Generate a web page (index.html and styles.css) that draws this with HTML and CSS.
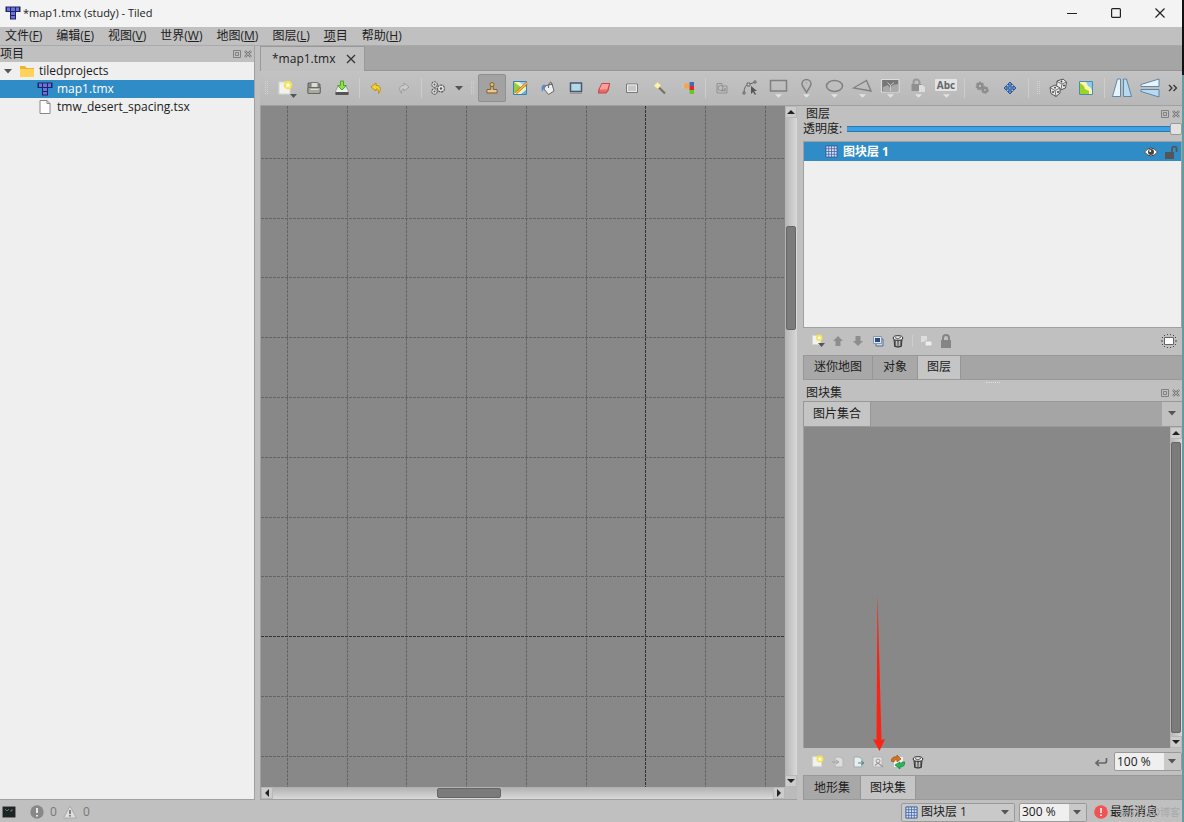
FILE: index.html
```html
<!DOCTYPE html>
<html lang="zh-CN">
<head>
<meta charset="utf-8">
<title>*map1.tmx (study) - Tiled</title>
<link rel="stylesheet" href="styles.css">
</head>
<body>
<svg class="defs" aria-hidden="true">
  <defs>
    <symbol id="logo" viewBox="0 0 16 14"><path d="M.5.5h15v5.500H11v7.500H5V6H.5z" fill="#20245e"/><path d="M2 1.500h3v3.500H2zM6 1.500h4v3.500H6zM11 1.500h3V5h-3zM6 6h4v3H6zM6 10h4v2.500H6z" fill="#6874e6"/></symbol>
    <symbol id="float" viewBox="0 0 8 8"><path d="M.5.5h7v7h-7zM2.500 2.500h3v3h-3z" fill="none" stroke="#808080"/></symbol>
    <symbol id="dockx" viewBox="0 0 8 8"><path d="M1 1l6 6M7 1L1 7" stroke="#777" stroke-width="2.400"/><path d="M1 1l6 6M7 1L1 7" stroke="#c4c4c4" stroke-width=".7"/></symbol>
    <symbol id="down" viewBox="0 0 8 5"><path d="M0 0h8L4 4.500z" fill="#555"/></symbol>
    <symbol id="new" viewBox="0 0 16 16"><path d="M2 2h11v12H2z" fill="#f2f2ee" stroke="#d6d6d0"/><circle cx="11" cy="5" r="4.300" fill="#f3e34d"/><path d="M11 2l.9 2 2.100.2-1.600 1.400.5 2.100-1.900-1.100-1.900 1.100.5-2.100L8 4.200l2.100-.2z" fill="#fffef0"/></symbol>
    <symbol id="grid" viewBox="0 0 14 14"><path d="M1 1h12v12H1z" fill="#d3e1f7" stroke="#36558f"/><path d="M4 1v12M7 1v12M10 1v12M1 4h12M1 7h12M1 10h12" stroke="#3d60a0" stroke-width=".8"/></symbol>
    <symbol id="trash" viewBox="0 0 14 14"><path d="M3 5l.7 7.500q3.300 1.200 6.600 0L11 5z" fill="#6d716d" stroke="#333"/><path d="M5.500 7l.3 5M8.500 7l-.3 5" stroke="#ccc"/><ellipse cx="7" cy="4" rx="4.800" ry="2.300" fill="#eee" stroke="#333"/><path d="M4 3.500l3 1.500 3-2" stroke="#555" fill="none"/></symbol>
    <symbol id="drop" viewBox="0 0 10 5"><path d="M0 0h10L5 5z" fill="#e3e3e3"/></symbol>
  </defs>
</svg>

<header class="titlebar">
  <svg class="app-logo"><use href="#logo"/></svg>
  <span class="title">*map1.tmx (study) - Tiled</span>
  <button class="win" aria-label="最小化"><svg viewBox="0 0 10 10"><path d="M0 5.500h10" stroke="#222"/></svg></button>
  <button class="win" aria-label="最大化"><svg viewBox="0 0 10 10"><rect x=".6" y=".6" width="8.800" height="8.800" rx="1" fill="none" stroke="#222" stroke-width="1.200"/></svg></button>
  <button class="win" aria-label="关闭"><svg viewBox="0 0 10 10"><path d="M.5.5l9 9M9.500.5l-9 9" stroke="#222" stroke-width="1.200"/></svg></button>
</header>

<nav class="menubar">
  <button>文件(<u>F</u>)</button><button>编辑(<u>E</u>)</button><button>视图(<u>V</u>)</button><button>世界(<u>W</u>)</button><button>地图(<u>M</u>)</button><button>图层(<u>L</u>)</button><button><u>项</u>目</button><button>帮助(<u>H</u>)</button>
</nav>

<div class="workspace">
  <aside class="project">
    <div class="dock-title"><h2>项目</h2><button aria-label="浮动"><svg><use href="#float"/></svg></button><button aria-label="关闭"><svg><use href="#dockx"/></svg></button></div>
    <ul class="tree">
      <li class="row root"><svg class="twist"><use href="#down"/></svg><svg class="ico" viewBox="0 0 16 14"><path d="M1 2h5l1.500 2H15v9H1z" fill="#f0b429"/><path d="M1 5h14v8H1z" fill="#ffd25c"/></svg><span>tiledprojects</span></li>
      <li class="row leaf selected"><svg class="ico"><use href="#logo"/></svg><span>map1.tmx</span></li>
      <li class="row leaf"><svg class="ico" viewBox="0 0 16 14"><path d="M3 .5h7l3 3v10H3z" fill="#fff" stroke="#888"/><path d="M10 .5v3h3" fill="none" stroke="#888"/></svg><span>tmw_desert_spacing.tsx</span></li>
    </ul>
  </aside>
  <div class="vsplit"></div>

  <section class="editor">
    <div class="doc-tabs"><div class="doc-tab"><span>*map1.tmx</span><button aria-label="关闭 map1.tmx"><svg viewBox="0 0 10 10"><path d="M1 1l8 8M9 1L1 9" stroke="#333" stroke-width="1.300"/></svg></button></div></div>

    <div class="toolbar">
      <i class="handle"></i>
      <button class="tool" aria-label="新建"><svg viewBox="0 0 22 22"><use href="#new" x="2" y="3" width="16" height="16"/><path d="M15 17h7l-3.500 4z" fill="#555"/></svg></button>
      <button class="tool" aria-label="打开"><svg viewBox="0 0 22 22"><path d="M5 16V6h4l1 1h7v9" fill="#8b8e84" stroke="#62645d"/><path d="M8 5.500h7v5H8z" fill="#dcdcd6" stroke="#777"/><path d="M5 10.500h12.500l-.5 6H5z" fill="#a7aa9e" stroke="#686a62"/><path d="M7.500 12.500h8" stroke="#dcded5"/></svg></button>
      <button class="tool" aria-label="保存"><svg viewBox="0 0 22 22"><path d="M7 9h8l2 4v4H5v-4z" fill="#e6e6e6" stroke="#999"/><path d="M4.500 15h13v3h-13z" fill="#555"/><path d="M5.500 13h11v2h-11z" fill="#f0f0f0"/><path d="M9.500 4h3v4.500h2.800L11 13 6.700 8.500h2.800z" fill="#8ce44c" stroke="#43a017" stroke-width=".9"/></svg></button>
      <i class="sep"></i>
      <button class="tool" aria-label="撤销"><svg viewBox="0 0 22 22"><path d="M6 10l5-4v2.500c5 0 5.500 4 2.500 8 .5-3.500 0-4.500-2.500-4.500v2z" fill="#f3d42c" stroke="#b58c0c" stroke-width=".9"/></svg></button>
      <button class="tool" aria-label="重做"><svg viewBox="0 0 22 22"><path d="M16 10l-5-4v2.500c-5 0-5.500 4-2.500 8-.5-3.500 0-4.500 2.500-4.500v2z" fill="#ccc" stroke="#999" stroke-width=".9"/></svg></button>
      <i class="sep"></i>
      <button class="tool" aria-label="命令"><svg viewBox="0 0 22 22" fill="none" stroke="#555"><g stroke-dasharray="2 .8"><circle cx="7.500" cy="7.500" r="2.500" stroke-width="1.500"/><circle cx="7.500" cy="14.500" r="2.500" stroke-width="1.500"/><circle cx="14" cy="11.500" r="3.200" stroke-width="1.700"/></g><g fill="#e8e8e8" stroke="none"><circle cx="7.500" cy="7.500" r="2.200"/><circle cx="7.500" cy="14.500" r="2.200"/><circle cx="14" cy="11.500" r="2.800"/></g><g fill="#555" stroke="none"><circle cx="7.500" cy="7.500" r="1"/><circle cx="7.500" cy="14.500" r="1"/><circle cx="14" cy="11.500" r="1.200"/></g></svg></button>
      <button class="tool-drop" aria-label="命令菜单"><svg><use href="#down"/></svg></button>
      <i class="handle"></i>
      <button class="tool active" aria-label="图章刷"><svg viewBox="0 0 22 22"><path d="M10 9h2l.5 3.500H16v3.500H6v-3.500h3.500z" fill="#d8b273" stroke="#7f5a24" stroke-width=".9"/><circle cx="11" cy="7.500" r="2" fill="#dfbd83" stroke="#7f5a24" stroke-width=".9"/><path d="M6.500 14h9" stroke="#f2dfb9"/></svg></button>
      <button class="tool" aria-label="地形刷"><svg viewBox="0 0 22 22"><path d="M4.500 4.500h13v13h-13z" fill="#f3f4c5" stroke="#3b7fad"/><path d="M5 5l8 6-8 6z" fill="#93cf3f"/><path d="M10 5h7v5z" fill="#95d0f0"/><path d="M12 17l5-4v4z" fill="#66b2e0"/><path d="M7 16L18 6" stroke="#b9601c" stroke-width="2.400"/><path d="M7 16L18 6" stroke="#ffbd4b" stroke-width="1.500"/></svg></button>
      <button class="tool" aria-label="填充"><svg viewBox="0 0 22 22"><path d="M8 9l7-2 2 7-5.500 3.500L7 12z" fill="#eee" stroke="#666"/><path d="M11.500 11c0-7 3.500-7 3.500-3" fill="none" stroke="#555"/><path d="M9 8c-4-1-5 1-4 7 2-3 2-4 4-5z" fill="#5b8ac4"/></svg></button>
      <button class="tool" aria-label="形状填充"><svg viewBox="0 0 22 22"><path d="M5.500 6h11v8.500h-11z" fill="#b4d6e8" stroke="#455968" stroke-width="1.500"/><path d="M5 16.500h12" stroke="#999"/></svg></button>
      <button class="tool" aria-label="橡皮"><svg viewBox="0 0 22 22"><path d="M9 6.500h7.500l-1.500 7-2 2.500H5.500l.5-3.500z" fill="#e56c6c" stroke="#cc4545" stroke-width="1.200" stroke-linejoin="round"/><path d="M9 7h7l-2 5.500H6.500z" fill="#ff9e9e"/></svg></button>
      <button class="tool" aria-label="矩形选择"><svg viewBox="0 0 22 22"><path d="M5.500 7h11v8.500h-11z" fill="#c6c6c6" stroke="#777"/><path d="M6.500 8h9v6.500h-9z" fill="none" stroke="#eee"/></svg></button>
      <button class="tool" aria-label="魔术棒"><svg viewBox="0 0 22 22"><path d="M10 10.500l6 6" stroke="#74745c" stroke-width="2.200"/><circle cx="8.500" cy="8.500" r="2.600" fill="#efe79a"/><path d="M8.500 4.500l.9 3.100L12.500 8.500l-3.100.9-.9 3.100-.9-3.100L4.500 8.500l3.100-.9z" fill="#fff6a8"/></svg></button>
      <button class="tool" aria-label="同类选择"><svg viewBox="0 0 22 22"><path d="M12.500 5H17v4h-4.500z" fill="#3d6db7"/><path d="M12.500 9H17v4h-4.500z" fill="#db2c20"/><path d="M12.500 13H17v4h-4.500z" fill="#65c72c"/><path d="M4.500 7h3v4h-3z" fill="#bcc4cc"/><circle cx="9.500" cy="9" r="2.700" fill="#f9a34a"/></svg></button>
      <i class="sep"></i>
      <button class="tool" aria-label="选择对象"><svg viewBox="0 0 22 22" fill="none" stroke="#929292"><path d="M6 6.500h5V9h5v7H6z"/><circle cx="9.500" cy="11" r="2.500"/><path d="M10 13.500h4V11" stroke-width="1.300"/></svg></button>
      <button class="tool" aria-label="编辑多边形"><svg viewBox="0 0 22 22" fill="none" stroke="#666"><path d="M5 16q0-8 5-9t6-2"/><path d="M4 15h2v2H4zM8 6h3v3H8zM15 4h2v2h-2z" fill="#ccc"/><path d="M12 9v8l2-2 2 3 1-1-2-3h3z" fill="#555" stroke="none"/></svg></button>
      <button class="tool" aria-label="插入矩形"><svg viewBox="0 0 22 22"><path d="M3.500 3.500h16v10.500h-16z" fill="none" stroke="#808080" stroke-width="1.500"/><use href="#drop" x="8" y="17" width="7" height="4"/></svg></button>
      <button class="tool" aria-label="插入点"><svg viewBox="0 0 22 22"><path d="M11.500 15.500C8.500 10 7 9 7 7a4.500 4.500 0 019 0c0 2-1.500 3-4.500 8.500z" fill="none" stroke="#808080" stroke-width="1.500"/><circle cx="11.500" cy="6" r="1" fill="#aaa"/><use href="#drop" x="8" y="17" width="7" height="4"/></svg></button>
      <button class="tool" aria-label="插入椭圆"><svg viewBox="0 0 22 22"><ellipse cx="11.500" cy="9" rx="8" ry="5.500" fill="none" stroke="#808080" stroke-width="1.500"/><use href="#drop" x="8" y="17" width="7" height="4"/></svg></button>
      <button class="tool" aria-label="插入多边形"><svg viewBox="0 0 22 22"><path d="M2.500 11L15.500 3.500l4.500 10.500z" fill="none" stroke="#808080" stroke-width="1.400"/><use href="#drop" x="8" y="17" width="7" height="4"/></svg></button>
      <button class="tool" aria-label="插入图块"><svg viewBox="0 0 22 22"><path d="M2.500 2.500h17.500v12.500h-17.500z" fill="#777" stroke="#ddd" stroke-width="1.200"/><path d="M4 10l5-2 2 3 3-3 5-1v7H4z" fill="#a9a9a9"/><path d="M11.500 14V8M8.500 5.500l3 3 3.500-3" fill="none" stroke="#ccc"/><use href="#drop" x="8" y="17" width="7" height="4"/></svg></button>
      <button class="tool" aria-label="插入模板"><svg viewBox="0 0 22 22"><path d="M6.500 8V5.500a3 3 0 016 0V8" fill="none" stroke="#999" stroke-width="2"/><path d="M4.500 7h10v7h-10z" fill="#8f8f8f"/><path d="M12 8h3l3 2v5h-6z" fill="#ddd"/><use href="#drop" x="8" y="17" width="7" height="4"/></svg></button>
      <button class="tool text-tool" aria-label="插入文字"><span>Abc</span><svg class="mini"><use href="#drop"/></svg></button>
      <i class="sep wide"></i>
      <button class="tool" aria-label="自动映射"><svg viewBox="0 0 22 22"><circle cx="9" cy="9" r="3.500" fill="#8b8b8b" stroke="#909090" stroke-width="1.800" stroke-dasharray="2 1"/><circle cx="14" cy="13" r="3" fill="#8b8b8b" stroke="#909090" stroke-width="1.800" stroke-dasharray="2 1"/><circle cx="9" cy="9" r="1.200" fill="#bbb"/><circle cx="14" cy="13" r="1" fill="#bbb"/></svg></button>
      <button class="tool" aria-label="偏移图层"><svg viewBox="0 0 22 22"><path d="M11 5l2.500 2.500H12V10h2.500V8.500L17 11l-2.500 2.500V12H12v2.500h1.500L11 17l-2.500-2.500H10V12H7.500v1.500L5 11l2.500-2.500V10H10V7.500H8.500z" fill="#5f93d5" stroke="#24518f" stroke-width=".9"/></svg></button>
      <i class="sep wide"></i>
      <i class="handle"></i>
      <button class="tool" aria-label="随机模式"><svg viewBox="0 0 22 22" stroke="#555" fill="#ececec" stroke-linejoin="round"><path d="M10 4l6-2 3.500 3-1 6-5 2-4-3z"/><path d="M3 10.500l5-2.500 5 3v5l-4 3.500-5-3z"/><path d="M3 10.500l5 3 5-2.500M8 13.500l1 6M10 4.500l5 2.500 4.500-2M15 7l-1 5" fill="none" stroke-width=".8"/><g fill="#333" stroke="none"><circle cx="8" cy="10.700" r=".9"/><circle cx="6" cy="15" r=".9"/><circle cx="11" cy="15" r=".9"/><circle cx="14.500" cy="4.500" r=".9"/><circle cx="17" cy="8.500" r=".9"/></g></svg></button>
      <button class="tool" aria-label="地形填充模式"><svg viewBox="0 0 22 22"><path d="M4.500 4.500h13v13h-13z" fill="#fbf6b0" stroke="#4c8dad"/><path d="M5 6l4 3 1 3 4 2v3H5z" fill="#9bd424"/><path d="M11 5h6v8l-2-3-2-1z" fill="#8acbed"/></svg></button>
      <i class="sep wide"></i>
      <button class="tool" aria-label="水平翻转"><svg viewBox="0 0 22 22" stroke="#567f9c" stroke-width=".9"><path d="M9.500 2v17.500H1.500L6.500 2z" fill="#e5f4ff"/><path d="M12.500 2v17.500h8L15.500 2z" fill="#b5daf2"/></svg></button>
      <button class="tool" aria-label="垂直翻转"><svg viewBox="0 0 22 22" stroke="#567f9c" stroke-width=".9"><path d="M2 9.500h18V2L2 7.500z" fill="#e5f4ff"/><path d="M2 12.500h18V20L2 14.500z" fill="#b5daf2"/></svg></button>
      <button class="more" aria-label="更多"><svg viewBox="0 0 10 8"><path d="M1 1l3 3-3 3M5.500 1l3 3-3 3" fill="none" stroke="#333" stroke-width="1.300"/></svg></button>
    </div>

    <div class="lower">
      <div class="map-view">
        <div class="canvas">
          <svg class="map-grid" aria-label="地图">
            <g class="minor">
              <path d="M26.500 0V2000M86.500 0V2000M145.500 0V2000M205.500 0V2000M265.500 0V2000M325.500 0V2000M444.500 0V2000M504.500 0V2000"/>
              <path d="M0 52.500H3000M0 112.500H3000M0 171.500H3000M0 231.500H3000M0 291.500H3000M0 351.500H3000M0 411.500H3000M0 470.500H3000M0 590.500H3000M0 650.500H3000"/>
            </g>
            <path class="major" d="M384.500 0V2000M0 530.500H3000"/>
          </svg>
        </div>
        <div class="vscroll"><button aria-label="向上"><svg viewBox="0 0 8 8"><path d="M0 6h8L4 2z"/></svg></button><div class="track"><i></i></div><button aria-label="向下"><svg viewBox="0 0 8 8"><path d="M0 2h8L4 6z"/></svg></button></div>
        <div class="hscroll"><button aria-label="向左"><svg viewBox="0 0 8 8"><path d="M6 0v8L2 4z"/></svg></button><div class="track"><i></i></div><button aria-label="向右"><svg viewBox="0 0 8 8"><path d="M2 0v8l4-4z"/></svg></button></div>
        <div class="corner"></div>
      </div>

      <div class="vsplit"></div>

      <aside class="docks">
        <section class="layers">
          <div class="dock-title"><h2>图层</h2><button aria-label="浮动"><svg><use href="#float"/></svg></button><button aria-label="关闭"><svg><use href="#dockx"/></svg></button></div>
          <div class="opacity"><label for="opacity">透明度:</label><input id="opacity" type="range" value="100"></div>
          <div class="layer-list">
            <div class="layer-row"><svg class="layer-icon"><use href="#grid"/></svg><strong>图块层 1</strong>
              <button aria-label="可见"><svg viewBox="0 0 14 12"><path d="M.5 6q6.500-8 13 0-6.500 8-13 0z" fill="#fff" stroke="#444"/><circle cx="7" cy="6" r="3" fill="#444"/><circle cx="6.200" cy="5" r="1" fill="#fff"/></svg></button>
              <button aria-label="锁定"><svg viewBox="0 0 14 14"><path d="M1 7h9v7H1z" fill="#555"/><path d="M8 7V4a2.300 2.300 0 014.600 0v3" fill="none" stroke="#555" stroke-width="1.700"/></svg></button>
            </div>
          </div>
          <div class="dock-tools">
            <button aria-label="新图层"><svg viewBox="0 0 14 14"><use href="#new" width="12" height="12"/><path d="M7 9h7l-3.500 4z" fill="#555"/></svg></button>
            <button aria-label="上移"><svg viewBox="0 0 14 14"><path d="M7 2l5 5H9.500v5h-5V7H2z" fill="#8d8d8d"/></svg></button>
            <button aria-label="下移"><svg viewBox="0 0 14 14"><path d="M7 12l5-5H9.500V2h-5v5H2z" fill="#8d8d8d"/></svg></button>
            <button aria-label="复制"><svg viewBox="0 0 14 14"><path d="M5 5h7v7H5z" fill="#ccd8ea" stroke="#5a6c88"/><path d="M2.500 2.500h8v7h-8z" fill="#e1e8f2" stroke="#8a98ae"/><path d="M4 4h5v4H4z" fill="#274c83"/></svg></button>
            <button aria-label="删除"><svg><use href="#trash"/></svg></button>
            <i class="sep wide"></i>
            <button aria-label="显示其他图层"><svg viewBox="0 0 14 14"><path d="M2 2h6v6H2z" fill="#ddd"/><path d="M6 7h7v5H6z" fill="#eee" stroke="#bbb"/></svg></button>
            <button aria-label="锁定其他图层"><svg viewBox="0 0 14 14"><path d="M2 6h10v8H2z" fill="#858585"/><path d="M4 7V4a3 3 0 016 0v3" fill="none" stroke="#858585" stroke-width="2"/></svg></button>
            <button class="end" aria-label="高亮当前图层"><svg viewBox="0 0 16 16"><path d="M3.500 4.500h9v7h-9z" fill="#fff" stroke="#666"/><g fill="#444"><path d="M3 2h1v1H3zM6 1h1v1H6zM9 1h1v1H9zM12 2h1v1h-1zM3 13h1v1H3zM6 14h1v1H6zM9 14h1v1H9zM12 13h1v1h-1zM1 4h1v1H1zM0 7.500h2v1H0zM1 11h1v1H1zM14 4h1v1h-1zM14 7.500h2v1h-2zM14 11h1v1h-1z"/></g></svg></button>
          </div>
          <div class="tabs" role="tablist"><button role="tab">迷你地图</button><button role="tab">对象</button><button role="tab" aria-selected="true">图层</button></div>
        </section>

        <div class="hsplit"><i></i></div>

        <section class="tilesets">
          <div class="dock-title"><h2>图块集</h2><button aria-label="浮动"><svg><use href="#float"/></svg></button><button aria-label="关闭"><svg><use href="#dockx"/></svg></button></div>
          <div class="tabs top" role="tablist"><button role="tab" aria-selected="true">图片集合</button><button class="menu" aria-label="图块集列表"><svg><use href="#down"/></svg></button></div>
          <div class="tile-view">
            <div class="tile-canvas"></div>
            <div class="vscroll"><button aria-label="向上"><svg viewBox="0 0 8 8"><path d="M0 6h8L4 2z"/></svg></button><div class="track full"><i></i></div><button aria-label="向下"><svg viewBox="0 0 8 8"><path d="M0 2h8L4 6z"/></svg></button></div>
            <svg class="pointer" viewBox="0 0 12 156" aria-hidden="true"><path d="M4.500 0l4 145 3.500-1-5.500 12L0 144l3.500 1z" fill="#fa2314"/></svg>
          </div>
          <div class="dock-tools">
            <button aria-label="新图块集"><svg viewBox="0 0 14 14"><use href="#new" width="13" height="13"/></svg></button>
            <button aria-label="嵌入图块集"><svg viewBox="0 0 14 14"><path d="M4 2h5l3 2v8H4z" fill="#ddd" stroke="#b4b4b4"/><path d="M1 7h6M5 5l3 2-3 2" stroke="#a0a0a0" fill="none"/></svg></button>
            <button aria-label="导出图块集"><svg viewBox="0 0 14 14"><path d="M3 2h5l3 2v8H3z" fill="#e8eeee" stroke="#9babab"/><path d="M7 8h5M10 6l3 2-3 2" stroke="#528895" fill="none"/></svg></button>
            <button aria-label="编辑图块集"><svg viewBox="0 0 14 14"><path d="M2 2h9v10H2z" fill="#e4e4e4" stroke="#b4b4b4"/><circle cx="7" cy="6" r="2" fill="none" stroke="#999"/><path d="M4 10.500l3-2.500 5 4" fill="none" stroke="#999" stroke-width="1.200"/></svg></button>
            <button aria-label="替换图块集"><svg viewBox="0 0 14 14"><path d="M3 2h9v10H3z" fill="#eee"/><path d="M0 6q1-5 6-4V0l4 4-4 3V5Q3 4 3 7z" fill="#d9741b" stroke="#8e4307" stroke-width=".6"/><path d="M14 7q0 5-5 5v2l-5-4 5-3v2q2 0 2-2z" fill="#26b85a" stroke="#0b7434" stroke-width=".6"/></svg></button>
            <button aria-label="删除图块集"><svg><use href="#trash"/></svg></button>
            <button class="end" aria-label="动态换行"><svg viewBox="0 0 14 14"><path d="M12.500 3v3q0 2-2 2H2M5 5L2 8l3 3" fill="none" stroke="#666" stroke-width="1.700"/></svg></button>
            <span class="combo"><select aria-label="图块集缩放"><option>100 %</option></select><svg><use href="#down"/></svg></span>
          </div>
          <div class="tabs" role="tablist"><button role="tab">地形集</button><button role="tab" aria-selected="true">图块集</button></div>
        </section>
      </aside>
    </div>
  </section>
</div>

<footer class="status">
  <button aria-label="控制台"><svg class="term" viewBox="0 0 14 12"><rect x=".5" y=".5" width="13" height="11" rx="1" fill="#1c2424" stroke="#777"/><path d="M3 3l2 2 2-2M8 5h2v-2" stroke="#8a9a8a" fill="none" stroke-width=".7"/></svg></button>
  <button class="count"><svg viewBox="0 0 14 14"><circle cx="7" cy="7" r="6.700" fill="#888"/><path d="M7 3v5M7 10v1.500" stroke="#fff" stroke-width="1.600"/></svg>0</button>
  <button class="count"><svg viewBox="0 0 14 14"><path d="M7 1l6.500 12H.5z" fill="#ddd" stroke="#aaa"/><path d="M7 5v4M7 10v1.500" stroke="#555" stroke-width="1.300"/></svg>0</button>
  <span class="combo layer-combo"><svg class="layer-icon"><use href="#grid"/></svg><select aria-label="当前图层"><option>图块层 1</option></select><svg><use href="#down"/></svg></span>
  <span class="combo"><select aria-label="地图缩放"><option>300 %</option></select><svg><use href="#down"/></svg></span>
  <button class="news"><svg viewBox="0 0 14 14"><circle cx="7" cy="7" r="6.800" fill="#f45252"/><path d="M7 3v5M7 9.500V11" stroke="#fff" stroke-width="1.600"/></svg>最新消息</button>
  <span class="mark">@51CTO博客</span>
</footer>
</body>
</html>
```
FILE: styles.css
```css
* { box-sizing: border-box; }
html, body { height: 100%; }
body {
  margin: 0;
  display: flex;
  flex-direction: column;
  overflow: hidden;
  position: relative;
  background: #c0c0c0;
  color: #202020;
  border-right: 2px solid;
  border-image: linear-gradient(#111 76px, #5f9ea0 76px) 1;
  font: 12px/16px "Open Sans", "Noto Sans CJK SC", sans-serif;
}
button, select, input { font: inherit; color: inherit; }
button { border: 0; padding: 0; background: none; display: flex; align-items: center; justify-content: center; white-space: nowrap; }
svg { display: block; flex: none; }
.defs { position: absolute; width: 0; height: 0; }

.titlebar { display: flex; align-items: center; flex: none; height: 27px; padding: 0 0 2px 5px; background: #f3f3f3; }
.app-logo { width: 16px; height: 14px; margin-right: 2px; }
.title { flex: 1; font-size: 11px; }
.win { width: 44px; height: 25px; }
.win svg { width: 10px; height: 10px; }

.menubar { display: flex; align-items: center; flex: none; height: 19px; gap: 14px; padding-left: 5px; border-bottom: 1px solid #aaa; }
.menubar u { text-underline-offset: 1px; }

.workspace { flex: 1; display: flex; min-height: 0; }
.project { width: 255px; display: flex; flex-direction: column; border-right: 1px solid #a0a0a0; }
.dock-title { display: flex; align-items: center; flex: none; height: 16px; gap: 3px; padding-right: 2px; }
.dock-title h2 { flex: 1; margin: 0; font-size: 12px; font-weight: 400; line-height: 16px; }
.dock-title svg { width: 8px; height: 8px; }
.tree { flex: 1; margin: 0; padding: 0; list-style: none; background: #efefef; border-bottom: 1px solid #a0a0a0; }
.row { display: flex; align-items: center; height: 18px; gap: 4px; padding-left: 4px; }
.leaf { padding-left: 37px; }
.selected { background: #308cc6; color: #fff; }
.twist { width: 8px; height: 5px; margin-right: 3px; }
.ico { width: 16px; height: 14px; }
.vsplit { flex: none; width: 6px; }
.project + .vsplit { width: 5px; }

.editor { flex: 1; display: flex; flex-direction: column; min-width: 0; }
.doc-tabs { display: flex; flex: none; height: 25px; background: #a5a5a5; border-bottom: 1px solid #959595; }
.doc-tab { display: flex; align-items: center; gap: 11px; padding: 0 8px 0 11px; height: 25px; background: #c0c0c0; border: 1px solid #999; border-bottom: 0; }
.doc-tab svg { width: 10px; height: 10px; }
.toolbar { display: flex; align-items: center; flex: none; height: 35px; overflow: hidden; background: linear-gradient(#c3c3c3, #b8b8b8); border-bottom: 1px solid #a0a0a0; }
.handle { flex: none; width: 12px; height: 14px; padding: 0 4px; background: conic-gradient(#d2d2d2 25%, transparent 0) 0 0 / 2px 2px content-box; }
.tool { flex: none; width: 28px; height: 28px; }
.tool > svg { width: 22px; height: 22px; }
.tool.active { background: #a2a2a2; border: 1px solid #8f8f8f; border-radius: 2px; }
.tool-drop { flex: none; width: 14px; }
.tool-drop svg { width: 8px; height: 5px; }
.text-tool { flex-direction: column; gap: 3px; }
.text-tool span { padding: 0 2px; background: #e3e3e3; color: #666; border-radius: 1px; font-size: 10px; line-height: 12px; font-weight: 700; }
.tool > .mini { width: 7px; height: 4px; }
.sep { flex: none; width: 6px; height: 20px; background: linear-gradient(#cdcdcd, #cdcdcd) center / 1px 100% no-repeat; }
.sep.wide { width: 8px; }
.more { flex: 1; }
.more svg { width: 10px; height: 8px; }

.lower { flex: 1; display: flex; min-height: 0; }
.map-view { flex: 1; display: grid; grid-template-columns: 1fr 12px; grid-template-rows: 1fr 12px; min-width: 0; border: 1px solid #a0a0a0; border-width: 0 0 1px 1px; }
.canvas { overflow: hidden; background: #888; min-width: 0; min-height: 0; }
.map-grid { width: 100%; height: 100%; fill: none; stroke-dasharray: 3 1; }
.minor { stroke: #646464; }
.major { stroke: #333; }
.vscroll, .hscroll { display: flex; min-height: 0; }
.vscroll { flex-direction: column; width: 12px; background: linear-gradient(90deg, #b4b4b4, #d9d9d9); }
.hscroll { background: linear-gradient(#b0b0b0, #d9d9d9); }
.vscroll button, .hscroll button { flex: none; width: 12px; height: 12px; background: #ccc; border: 1px solid #b8b8b8; }
.vscroll button svg, .hscroll button svg { width: 8px; height: 8px; fill: #222; }
.track { flex: 1; display: flex; }
.vscroll .track { flex-direction: column; padding: 0 1px; }
.vscroll .track::before { content: ""; flex: 108; }
.vscroll .track i { flex: 102; background: #7b7b7b; border: 1px solid #666; border-radius: 2px; }
.vscroll .track::after { content: ""; flex: 445; }
.hscroll .track { padding: 1px 0; }
.hscroll .track::before { content: ""; flex: 165; }
.hscroll .track i { flex: 62; background: #7b7b7b; border: 1px solid #666; border-radius: 2px; }
.hscroll .track::after { content: ""; flex: 273; }
.vscroll .track.full { padding: 3px 1px; }
.track.full::before, .vscroll .track.full::after { display: none; }
.corner { background: #bbb; }

.docks { width: 379px; display: flex; flex-direction: column; }
.layers { flex: 186 1 88px; display: flex; flex-direction: column; min-height: 0; }
.tilesets { flex: 321 1 95px; display: flex; flex-direction: column; min-height: 0; }
.docks .dock-title { padding-left: 3px; }
.opacity { display: flex; align-items: center; flex: none; height: 14px; gap: 5px; margin-bottom: 5px; }
.opacity input { appearance: none; flex: 1; min-width: 0; height: 12px; margin: 0; background: transparent; }
.opacity input::-webkit-slider-runnable-track { height: 12px; background: linear-gradient(#2878ad 1px, #3da0e4 1px, #3da0e4 5px, #2878ad 5px) center / 100% 6px no-repeat; }
.opacity input::-webkit-slider-thumb { appearance: none; width: 12px; height: 12px; background: #e2e2e2; border: 1px solid #999; border-radius: 2px; }
.layer-list { flex: 1; background: #efefef; border: 1px solid #a0a0a0; min-height: 0; }
.layer-row { display: flex; align-items: center; height: 19px; padding-left: 21px; background: #308cc6; color: #fff; }
.layer-icon { width: 13px; height: 13px; margin-right: 5px; }
.layer-row strong { flex: 1; }
.layer-row button { width: 20px; }
.layer-row button svg { width: 14px; height: 14px; }
.dock-tools { display: flex; align-items: center; flex: none; height: 27px; padding-left: 5px; }
.dock-tools button { width: 20px; height: 20px; }
.dock-tools button svg { width: 14px; height: 14px; }
.dock-tools .sep { height: 12px; }
.dock-tools .end { margin-left: auto; width: 26px; }
.layers .end svg { width: 16px; height: 16px; }
.tabs { display: flex; flex: none; height: 25px; background: #a5a5a5; border-top: 1px solid #989898; border-bottom: 1px solid #999; }
.tabs button { padding: 0 10px; background: #a8a8a8; border-left: 1px solid #969696; }
.tabs button[aria-selected] { padding: 0 9px; background: #c5c5c5; border-right: 1px solid #969696; }
.tabs.top { height: 26px; }
.tabs .menu { margin-left: auto; width: 20px; padding: 0; background: #c0c0c0; border: 0; }
.tabs .menu svg { width: 8px; height: 5px; }
.hsplit { flex: none; height: 5px; display: flex; justify-content: center; align-items: center; }
.hsplit i { width: 14px; border-top: 1px dotted #ddd; }
.tile-view { flex: 1; display: flex; position: relative; min-height: 0; border-left: 1px solid #a0a0a0; }
.tile-canvas { flex: 1; background: #888; }
.pointer { position: absolute; left: 69px; bottom: -3px; width: 12px; height: 156px; }

.combo { display: flex; align-items: center; position: relative; height: 19px; background: #efefef; border: 1px solid #999; border-radius: 2px; }
.combo select { appearance: none; width: 66px; height: 17px; padding: 0 18px 0 2px; border: 0; background: linear-gradient(#c9c9c9, #c9c9c9) right / 17px 100% no-repeat; }
.combo > svg:last-child { position: absolute; right: 5px; top: 6px; width: 8px; height: 5px; pointer-events: none; }
.layer-combo { width: 114px; padding-left: 3px; background: #c9c9c9; }
.layer-combo select { flex: 1; padding-left: 0; }
.layer-combo .layer-icon { margin-right: 3px; }

.status { display: flex; align-items: center; flex: none; height: 22px; padding: 2px 0 0 2px; position: relative; }
.term { width: 14px; height: 12px; }
.count { gap: 6px; color: #777; margin-left: 6px; }
.status > button:first-child { margin-right: 8px; }
.count svg, .news svg { width: 14px; height: 14px; }
.layer-combo { margin-left: auto; margin-right: 4px; }
.news { gap: 2px; margin-left: 7px; margin-right: 24px; }
.mark { position: absolute; right: 2px; bottom: 2px; color: #a9a9a9; font-size: 10px; }
```
